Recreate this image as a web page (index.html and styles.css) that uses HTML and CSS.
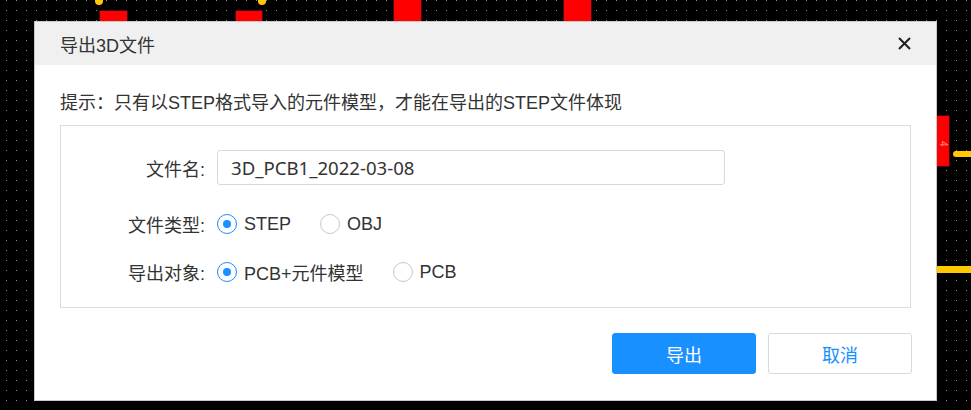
FILE: index.html
```html
<!DOCTYPE html>
<html lang="zh-CN">
<head>
<meta charset="utf-8">
<title>导出3D文件</title>
<link rel="stylesheet" href="styles.css">
</head>
<body>
<svg class="board" width="971" height="410" viewBox="0 0 971 410" xmlns="http://www.w3.org/2000/svg">
  <defs>
    <pattern id="dots" x="6" y="0" width="10" height="10" patternUnits="userSpaceOnUse">
      <rect x="0" y="0" width="1" height="1" fill="#8c8c8c"/>
    </pattern>
  </defs>
  <rect width="971" height="410" fill="#000"/>
  <rect width="971" height="410" fill="url(#dots)"/>
  <g fill="#ff0000" stroke="#3a0a1a" stroke-width="1">
    <rect x="99.5" y="10.5" width="28" height="20"/>
    <rect x="235.5" y="10.5" width="27" height="20"/>
    <rect x="393.5" y="-1" width="28" height="30"/>
    <rect x="563.5" y="-1" width="28" height="30"/>
    <rect x="930.5" y="115.5" width="19" height="51"/>
  </g>
  <text x="0" y="0" class="padnum" transform="translate(940 141) rotate(90)">4</text>
  <g fill="#ffc800">
    <circle cx="99" cy="1" r="4"/>
    <circle cx="262" cy="1" r="4"/>
    <rect x="953" y="151" width="30" height="6" rx="3"/>
    <rect x="930" y="266" width="50" height="7" rx="3"/>
  </g>
</svg>

<div class="dialog">
  <div class="dialog-header">
    <span class="dialog-title">导出3D文件</span>
    <svg class="close" width="13" height="13" viewBox="0 0 13 13" xmlns="http://www.w3.org/2000/svg">
      <path d="M1 1 L12 12 M12 1 L1 12" stroke="#1f1f1f" stroke-width="2" fill="none"/>
    </svg>
  </div>
  <div class="dialog-body">
    <p class="hint">提示：只有以STEP格式导入的元件模型，才能在导出的STEP文件体现</p>
    <div class="form-box">
      <div class="form-row row-name">
        <label class="form-label">文件名:</label>
        <div class="input">3D_PCB1_2022-03-08</div>
      </div>
      <div class="form-row row-type">
        <span class="form-label">文件类型:</span>
        <span class="option"><span class="radio checked"></span><span class="opt-text">STEP</span></span>
        <span class="option"><span class="radio"></span><span class="opt-text">OBJ</span></span>
      </div>
      <div class="form-row row-target">
        <span class="form-label">导出对象:</span>
        <span class="option"><span class="radio checked"></span><span class="opt-text">PCB+元件模型</span></span>
        <span class="option"><span class="radio"></span><span class="opt-text">PCB</span></span>
      </div>
    </div>
    <div class="footer">
      <button class="btn btn-primary">导出</button>
      <button class="btn btn-default">取消</button>
    </div>
  </div>
</div>
</body>
</html>
```

FILE: styles.css
```css
html, body {
  margin: 0;
  padding: 0;
}

body {
  width: 971px;
  height: 410px;
  overflow: hidden;
  position: relative;
  background: #000;
  font-family: "Liberation Sans", "Noto Sans CJK SC", sans-serif;
  color: #333;
}

.board {
  position: absolute;
  left: 0;
  top: 0;
  display: block;
}

.padnum {
  font-family: "Liberation Sans", sans-serif;
  font-size: 10px;
  fill: #ff9a9a;
}

.dialog {
  position: relative;
  margin: 21px 0 0 34px;
  width: 903px;
  height: 380px;
  box-sizing: border-box;
  border: 1px solid #c9c9c9;
  background: #fff;
}

.dialog-header {
  height: 43px;
  background: #f0f0f0;
  display: flex;
  align-items: center;
  justify-content: space-between;
  padding: 0 25px 0 25px;
}

.dialog-title {
  font-size: 18px;
  color: #333;
}

.close {
  display: block;
}

.dialog-body {
  padding: 0 25px;
}

.hint {
  margin: 0;
  padding: 26px 0 10px;
  line-height: 24px;
  font-size: 18px;
  color: #333;
}

.form-box {
  box-sizing: border-box;
  height: 183px;
  width: 851px;
  border: 1px solid #dcdcdc;
  padding-top: 24px;
}

.form-row {
  display: flex;
  align-items: center;
}

.row-name {
  height: 35px;
}

.row-type {
  height: 30px;
  margin-top: 24px;
}

.row-target {
  height: 30px;
  margin-top: 18px;
}

.form-label {
  width: 144px;
  text-align: right;
  margin-right: 12px;
  font-size: 18px;
  color: #333;
}

.input {
  box-sizing: border-box;
  width: 508px;
  height: 35px;
  border: 1px solid #d9d9d9;
  border-radius: 3px;
  padding-left: 13px;
  display: flex;
  align-items: center;
  font-family: "Noto Sans", "Liberation Sans", sans-serif;
  font-size: 18.6px;
  color: #333;
}

.option {
  display: inline-flex;
  align-items: center;
  margin-right: 29px;
}

.radio {
  box-sizing: border-box;
  width: 20px;
  height: 20px;
  border: 1px solid #c8c8c8;
  border-radius: 50%;
  margin-right: 7px;
  display: inline-flex;
  align-items: center;
  justify-content: center;
  background: #fff;
}

.radio.checked {
  border-color: #1890ff;
}

.radio.checked::after {
  content: "";
  width: 8px;
  height: 8px;
  border-radius: 50%;
  background: #1890ff;
}

.opt-text {
  font-size: 18px;
  color: #333;
}

.footer {
  display: flex;
  justify-content: flex-end;
  gap: 12px;
  margin-top: 25px;
  margin-right: -1px;
}

.btn {
  width: 144px;
  height: 41px;
  box-sizing: border-box;
  border-radius: 3px;
  font-family: "Liberation Sans", "Noto Sans CJK SC", sans-serif;
  font-size: 18px;
  padding: 0;
}

.btn-primary {
  background: #1890ff;
  border: 1px solid #1890ff;
  color: #fff;
}

.btn-default {
  background: #fff;
  border: 1px solid #d9d9d9;
  color: #1890ff;
}
```
